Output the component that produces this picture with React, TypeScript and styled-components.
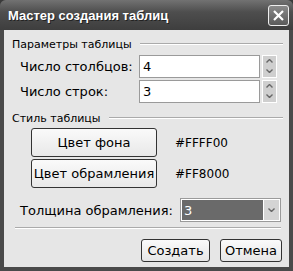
import styled, { createGlobalStyle } from 'styled-components';

const Global = createGlobalStyle`
  html, body { margin: 0; padding: 0; background: #3a3a3a; }
  * { box-sizing: border-box; }
`;

const Window = styled.div`
  width: 293px;
  height: 271px;
  display: flex;
  flex-direction: column;
  background: #4a4a4a;
  border-radius: 6px 6px 0 0;
  font-family: 'DejaVu Sans', Verdana, sans-serif;
  overflow: hidden;
`;

const TitleBar = styled.div`
  height: 30px;
  display: flex;
  align-items: center;
  justify-content: space-between;
  padding: 0 4px 0 8px;
  background: linear-gradient(#727272, #4e4e4e 40%, #3e3e3e);
`;

const Title = styled.span`
  color: #fff;
  font-family: 'Liberation Sans', Arial, sans-serif;
  font-weight: bold;
  font-size: 13px;
  text-shadow: 1px 1px 0 #222;
`;

const CloseBtn = styled.div`
  width: 21px;
  height: 21px;
  border: 1px solid #eee;
  border-radius: 3px;
  background: linear-gradient(#8a8a8a, #5a5a5a);
  display: flex;
  align-items: center;
  justify-content: center;
`;

const Body = styled.div`
  flex: 1;
  margin: 0 4px 4px 4px;
  background: #e6e6e6;
  padding: 5px 6px 0 8px;
  display: flex;
  flex-direction: column;
  font-size: 12px;
  color: #000;
`;

const GroupHead = styled.div`
  display: flex;
  align-items: center;
  gap: 8px;
  height: 18px;
  font-size: 11px;
  &::after {
    content: '';
    flex: 1;
    height: 0;
    border-top: 1px solid #aaa;
    border-bottom: 1px solid #fff;
  }
`;

const FieldRow = styled.div<{ $top: number }>`
  display: flex;
  align-items: center;
  height: 24px;
  margin-top: ${(p) => p.$top}px;
  padding-left: 8px;
`;

const Label = styled.span<{ $w: number }>`
  width: ${(p) => p.$w}px;
  font-size: 13px;
`;

const TextBox = styled.div`
  width: 121px;
  height: 23px;
  background: #fff;
  border: 1px solid #9a9a9a;
  display: flex;
  align-items: center;
  padding-left: 3px;
  font-size: 13px;
`;

const Spin = styled.div`
  width: 15px;
  height: 23px;
  margin-left: 2px;
  border: 1px solid #fff;
  background: #cfcfcf;
  display: flex;
  flex-direction: column;
  align-items: center;
  justify-content: space-around;
`;

const ColorRow = styled.div`
  display: flex;
  align-items: center;
  height: 31px;
  padding-left: 19px;
`;

const Btn = styled.div<{ $w: number }>`
  width: ${(p) => p.$w}px;
  height: 29px;
  border: 1px solid #333;
  border-radius: 3px;
  background: linear-gradient(#fafafa, #e8e8e8);
  display: flex;
  align-items: center;
  justify-content: center;
  font-size: 13px;
  white-space: nowrap;
`;

const Hex = styled.span`
  margin-left: 18px;
  font-size: 12px;
`;

const Select = styled.div`
  width: 101px;
  height: 24px;
  border: 1px solid #9a9a9a;
  background: #fff;
  padding: 1px;
  display: flex;
`;

const SelectValue = styled.div`
  flex: 1;
  background: #6a6a6a;
  color: #fff;
  font-size: 13px;
  padding-left: 2px;
  display: flex;
  align-items: center;
`;

const SelectArrow = styled.div`
  width: 15px;
  margin-left: 1px;
  background: #d4d4d4;
  display: flex;
  align-items: center;
  justify-content: center;
`;

const Separator = styled.div`
  margin: 5px 2px 0 3px;
  border-top: 1px solid #aaa;
  border-bottom: 1px solid #fff;
`;

const Footer = styled.div`
  display: flex;
  justify-content: flex-end;
  gap: 10px;
  margin-top: 10px;
  padding-right: 1px;
`;

const FootBtn = styled.div<{ $w: number }>`
  width: ${(p) => p.$w}px;
  height: 23px;
  border: 1px solid #333;
  border-radius: 3px;
  background: linear-gradient(#fafafa, #e6e6e6);
  display: flex;
  align-items: center;
  justify-content: center;
  font-size: 13px;
`;

const Chevron = ({ up }: { up?: boolean }) => (
  <svg width="7" height="4" viewBox="0 0 7 4">
    <path d={up ? 'M0.5 3.5 L3.5 0.5 L6.5 3.5' : 'M0.5 0.5 L3.5 3.5 L6.5 0.5'} stroke="#666" strokeWidth="1.4" fill="none" />
  </svg>
);

export default function App() {
  return (
    <>
      <Global />
      <Window>
        <TitleBar>
          <Title>Мастер создания таблиц</Title>
          <CloseBtn>
            <svg width="13" height="13" viewBox="0 0 13 13">
              <path d="M2 2 L11 11 M11 2 L2 11" stroke="#fff" strokeWidth="2.2" />
            </svg>
          </CloseBtn>
        </TitleBar>
        <Body>
          <GroupHead>Параметры таблицы</GroupHead>
          <FieldRow $top={1}>
            <Label $w={119}>Число столбцов:</Label>
            <TextBox>4</TextBox>
            <Spin>
              <Chevron up />
              <Chevron />
            </Spin>
          </FieldRow>
          <FieldRow $top={1}>
            <Label $w={119}>Число строк:</Label>
            <TextBox>3</TextBox>
            <Spin>
              <Chevron up />
              <Chevron />
            </Spin>
          </FieldRow>
          <GroupHead style={{ marginTop: 6 }}>Стиль таблицы</GroupHead>
          <ColorRow>
            <Btn $w={126}>Цвет фона</Btn>
            <Hex>#FFFF00</Hex>
          </ColorRow>
          <ColorRow>
            <Btn $w={126}>Цвет обрамления</Btn>
            <Hex>#FF8000</Hex>
          </ColorRow>
          <FieldRow $top={9}>
            <Label $w={160}>Толщина обрамления:</Label>
            <Select>
              <SelectValue>3</SelectValue>
              <SelectArrow>
                <Chevron />
              </SelectArrow>
            </Select>
          </FieldRow>
          <Separator />
          <Footer>
            <FootBtn $w={69}>Создать</FootBtn>
            <FootBtn $w={62}>Отмена</FootBtn>
          </Footer>
        </Body>
      </Window>
    </>
  );
}
